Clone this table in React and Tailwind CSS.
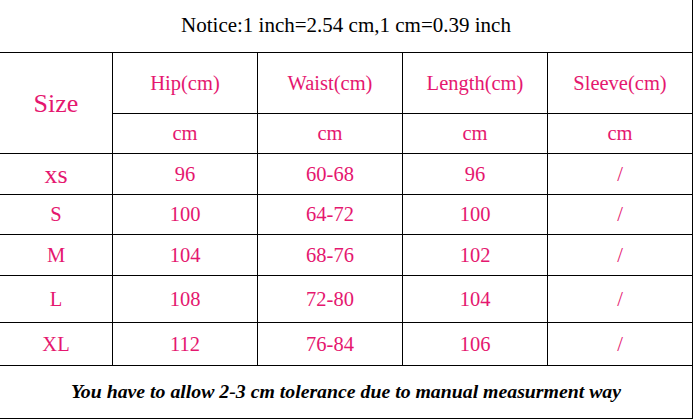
const rows = [
  { size: "xs", hip: "96", waist: "60-68", length: "96", h: "h-[41px]", big: true },
  { size: "S", hip: "100", waist: "64-72", length: "100", h: "h-[40px]" },
  { size: "M", hip: "104", waist: "68-76", length: "102", h: "h-[41px]" },
  { size: "L", hip: "108", waist: "72-80", length: "104", h: "h-[47px]" },
  { size: "XL", hip: "112", waist: "76-84", length: "106", h: "h-[43px]" },
];

const heads = ["Hip(cm)", "Waist(cm)", "Length(cm)", "Sleeve(cm)"];

export default function App() {
  return (
    <div className="w-[695px] h-[419px] bg-white overflow-hidden font-['Liberation_Serif',serif]">
      <div className="w-[693px]">
        {/* notice */}
        <div className="h-[52px] border-r border-black flex items-center justify-center text-[21px] text-black">
          Notice:1 inch=2.54 cm,1 cm=0.39 inch
        </div>

        {/* size grid */}
        <div className="grid grid-cols-[112px_145px_145px_145px_145px] border-r border-black text-[#e5176f] text-[20.5px]">
          <div className="row-span-2 border-t border-black flex items-center justify-center text-[26px]">
            Size
          </div>
          {heads.map((t) => (
            <div key={t} className="h-[61px] border-t border-l border-black flex items-center justify-center">
              {t}
            </div>
          ))}
          {heads.map((t) => (
            <div key={t + "-u"} className="h-[40px] border-t border-l border-black flex items-center justify-center">
              cm
            </div>
          ))}

          {rows.map((r) => (
            <div key={r.size} className="contents">
              <div className={`${r.h} border-t border-black flex items-center justify-center ${r.big ? "text-[26px]" : ""}`}>
                {r.size}
              </div>
              <div className={`${r.h} border-t border-l border-black flex items-center justify-center`}>{r.hip}</div>
              <div className={`${r.h} border-t border-l border-black flex items-center justify-center`}>{r.waist}</div>
              <div className={`${r.h} border-t border-l border-black flex items-center justify-center`}>{r.length}</div>
              <div className={`${r.h} border-t border-l border-black flex items-center justify-center`}>/</div>
            </div>
          ))}
        </div>

        {/* footer note */}
        <div className="h-[54px] border-t border-b border-r border-black flex items-center justify-center text-[19.8px] font-bold italic text-black">
          You have to allow 2-3 cm tolerance due to manual measurment way
        </div>
      </div>
    </div>
  );
}
